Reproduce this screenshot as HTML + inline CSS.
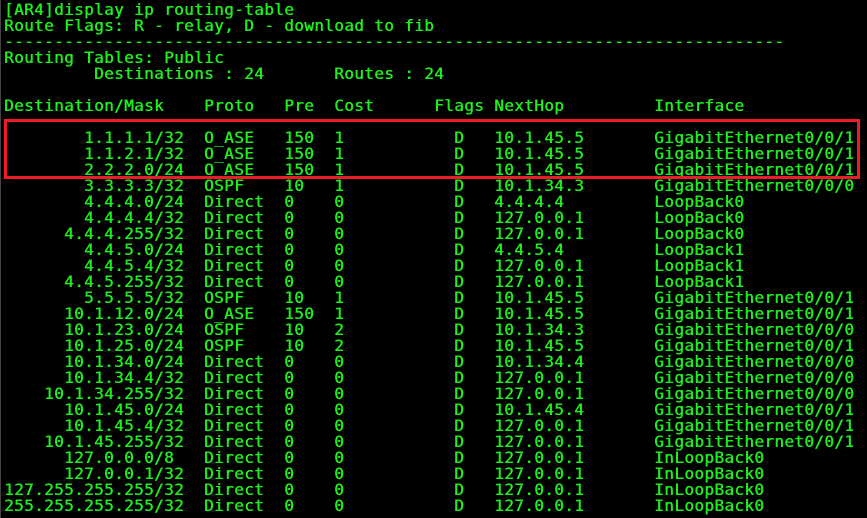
<!DOCTYPE html>
<html><head><meta charset="utf-8"><style>
html,body{margin:0;padding:0;background:#000;width:867px;height:518px;overflow:hidden}
pre{margin:0;position:absolute;left:4px;top:2px;font-family:"DejaVu Sans Mono","Liberation Mono",monospace;font-size:16px;letter-spacing:0.37px;line-height:16px;color:#1cf01c;text-shadow:0.5px 0 0 #1cf01c}
.box{position:absolute;left:4px;top:119px;width:850px;height:54px;border:3.5px solid #ee1c28}
.edge{position:absolute;left:0;top:0;width:1px;height:518px;background:#444}
</style></head><body>
<div class="edge"></div>
<pre>[AR4]display ip routing-table
Route Flags: R - relay, D - download to fib
------------------------------------------------------------------------------
Routing Tables: Public
         Destinations : 24       Routes : 24

Destination/Mask    Proto   Pre  Cost      Flags NextHop         Interface

        1.1.1.1/32  O_ASE   150  1           D   10.1.45.5       GigabitEthernet0/0/1
        1.1.2.1/32  O_ASE   150  1           D   10.1.45.5       GigabitEthernet0/0/1
        2.2.2.0/24  O_ASE   150  1           D   10.1.45.5       GigabitEthernet0/0/1
        3.3.3.3/32  OSPF    10   1           D   10.1.34.3       GigabitEthernet0/0/0
        4.4.4.0/24  Direct  0    0           D   4.4.4.4         LoopBack0
        4.4.4.4/32  Direct  0    0           D   127.0.0.1       LoopBack0
      4.4.4.255/32  Direct  0    0           D   127.0.0.1       LoopBack0
        4.4.5.0/24  Direct  0    0           D   4.4.5.4         LoopBack1
        4.4.5.4/32  Direct  0    0           D   127.0.0.1       LoopBack1
      4.4.5.255/32  Direct  0    0           D   127.0.0.1       LoopBack1
        5.5.5.5/32  OSPF    10   1           D   10.1.45.5       GigabitEthernet0/0/1
      10.1.12.0/24  O_ASE   150  1           D   10.1.45.5       GigabitEthernet0/0/1
      10.1.23.0/24  OSPF    10   2           D   10.1.34.3       GigabitEthernet0/0/0
      10.1.25.0/24  OSPF    10   2           D   10.1.45.5       GigabitEthernet0/0/1
      10.1.34.0/24  Direct  0    0           D   10.1.34.4       GigabitEthernet0/0/0
      10.1.34.4/32  Direct  0    0           D   127.0.0.1       GigabitEthernet0/0/0
    10.1.34.255/32  Direct  0    0           D   127.0.0.1       GigabitEthernet0/0/0
      10.1.45.0/24  Direct  0    0           D   10.1.45.4       GigabitEthernet0/0/1
      10.1.45.4/32  Direct  0    0           D   127.0.0.1       GigabitEthernet0/0/1
    10.1.45.255/32  Direct  0    0           D   127.0.0.1       GigabitEthernet0/0/1
      127.0.0.0/8   Direct  0    0           D   127.0.0.1       InLoopBack0
      127.0.0.1/32  Direct  0    0           D   127.0.0.1       InLoopBack0
127.255.255.255/32  Direct  0    0           D   127.0.0.1       InLoopBack0
255.255.255.255/32  Direct  0    0           D   127.0.0.1       InLoopBack0</pre>
<div class="box"></div>
</body></html>
